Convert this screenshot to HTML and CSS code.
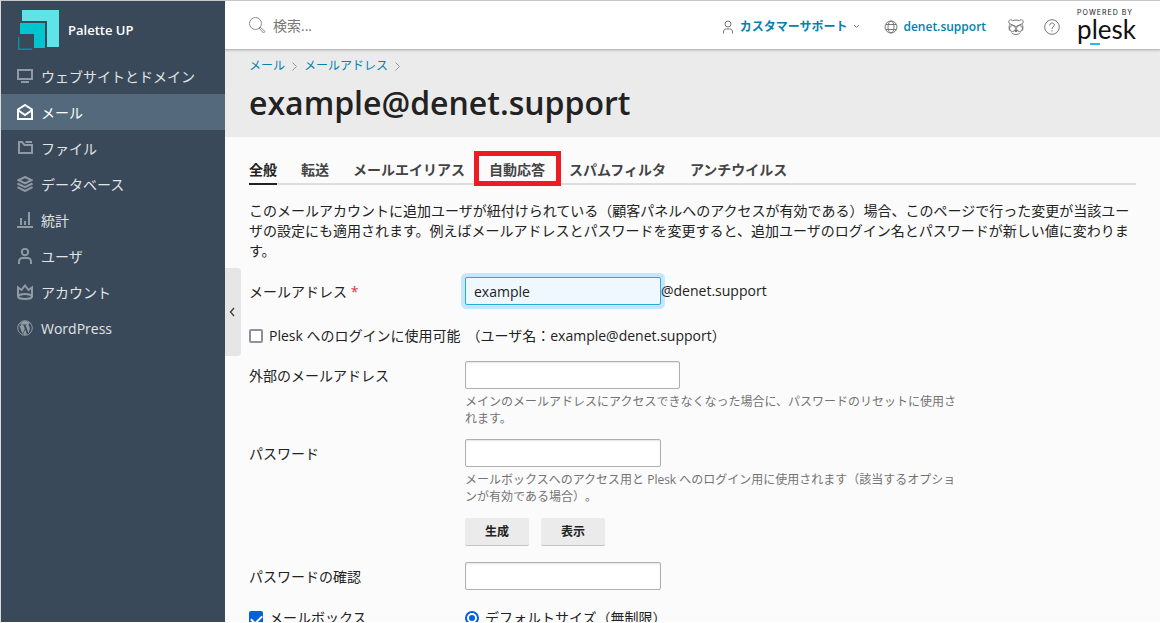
FILE: index.html
```html
<!DOCTYPE html>
<html lang="ja">
<head>
<meta charset="utf-8">
<meta name="viewport" content="width=device-width, initial-scale=1">
<title>example@denet.support</title>
<link rel="stylesheet" href="styles.css">
</head>
<body>
<div class="app">
  <aside class="sidebar">
    <a class="brand" href="#">
      <svg class="brand-logo" width="42" height="42" viewBox="0 0 42 42">
        <path d="M4 1h37v37H29V12H4z" fill="#5de3e8"/>
        <path d="M2 14h25v25H16V25H2z" fill="#00c4ce"/>
        <path d="M.750 28V40.250h13.500" fill="none" stroke="#058f9b" stroke-width="1.500"/>
      </svg>
      <span>Palette UP</span>
    </a>
    <nav class="side-nav">
      <a class="side-link" href="#">
        <svg class="icon" viewBox="0 0 16 16"><path d="M1 2h14v9H1zM4 14h8"/></svg>
        <span>ウェブサイトとドメイン</span>
      </a>
      <a class="side-link is-active" href="#" aria-current="page">
        <svg class="icon" viewBox="0 0 16 16"><path d="M1 5.500L8 1l7 4.500V15H1zM1.500 6.500L8 11l6.500-4.500"/></svg>
        <span>メール</span>
      </a>
      <a class="side-link" href="#">
        <svg class="icon" viewBox="0 0 16 16"><path d="M2 2h3l2.500 3H15v8H2zM8.500 2H15"/></svg>
        <span>ファイル</span>
      </a>
      <a class="side-link" href="#">
        <svg class="icon" viewBox="0 0 16 16"><path d="M8 1l6.500 3.200L8 7.500 1.500 4.200zM.500 7.500L8 11.200l7.500-3.700M.500 11.200L8 15l7.500-3.800"/></svg>
        <span>データベース</span>
      </a>
      <a class="side-link" href="#">
        <svg class="icon" viewBox="0 0 16 16"><path d="M0 15h16M4 6v7M8 9v4M12 0v13"/></svg>
        <span>統計</span>
      </a>
      <a class="side-link" href="#">
        <svg class="icon" viewBox="0 0 16 16"><circle cx="8" cy="4" r="3.200"/><path d="M2 16v-2.500a3.500 3.500 0 0 1 3.500-3.500h5a3.500 3.500 0 0 1 3.500 3.500V16"/></svg>
        <span>ユーザ</span>
      </a>
      <a class="side-link" href="#">
        <svg class="icon" viewBox="0 0 16 16"><path d="M1 13V3.500L4.500 6 8 1.500 11.500 6 15 3.500V13"/><ellipse cx="8" cy="12.500" rx="7" ry="2.500"/></svg>
        <span>アカウント</span>
      </a>
      <a class="side-link" href="#">
        <svg class="icon wp" viewBox="0 0 16 16"><circle cx="8" cy="8" r="7.300"/><path class="wp-fill" d="M2 5l3.700 9.300L7.800 8.500 6.500 5.200 5.500 5v-.6h4.200V5l-1.100.1 2.900 8.300 1-3.300c.6-1.900.3-2.700-.5-4.100-.8-1.300-.4-2.700 1-2.800A6.200 6.200 0 0 0 2.800 4.400h1.900V5l-1 .1L6 12l1.200-3.300zM8.200 9.300L6.300 14.500c1.200.3 2.500.2 3.700-.1z"/></svg>
        <span>WordPress</span>
      </a>
    </nav>
  </aside>

  <div class="main">
    <button class="collapse" type="button" aria-label="サイドバーを折りたたむ">
      <svg width="6" height="10" viewBox="0 0 6 10"><path d="M5 1L1.500 5 5 9"/></svg>
    </button>
    <header class="topbar">
      <form class="search" role="search">
        <svg class="search-icon" width="17" height="17" viewBox="0 0 17 17"><circle cx="6.500" cy="6.500" r="6"/><path d="M11 10l5 4.500-1.500 1.500L10 11z"/></svg>
        <input class="search-input" type="search" placeholder="検索..." aria-label="検索">
      </form>
      <div class="tools">
        <button class="tool account" type="button">
          <svg class="tool-icon" width="12" height="14" viewBox="0 0 12 14"><circle cx="6" cy="4" r="3"/><path d="M1.500 13.500V12c0-2 1-3 3-3h3c2 0 3 1 3 3v1.500"/></svg>
          <span>カスタマーサポート</span>
          <svg class="tool-icon" width="7" height="5" viewBox="0 0 7 5"><path d="M1 1l2.500 2.500L6 1"/></svg>
        </button>
        <a class="tool domain" href="#">
          <svg class="tool-icon" width="14" height="14" viewBox="0 0 14 14"><circle cx="7" cy="7" r="6"/><ellipse cx="7" cy="7" rx="3" ry="6"/><path d="M2 4.500h10M2 9.500h10"/></svg>
          <span>denet.support</span>
        </a>
        <button class="tool panda" type="button" aria-label="アドバイザー">
          <svg class="tool-icon" width="16" height="18" viewBox="0 0 16 18"><path d="M4.500 2.800C3.500.800.500 1.800.700 4c.1 1 .700 1.500 1.500 1.800M11.500 2.800c1-2 4-1 3.800 1.200-.1 1-.700 1.500-1.500 1.800M4.500 2.800c2-.900 5-.900 7 0M2.200 5.800C.800 8 .800 10.500 1.500 12.500M13.800 5.800c1.400 2.200 1.400 4.700.700 6.700M2.500 6L8 8.500 13.500 6M3.500 14.500c2.500 2.700 6.500 2.700 9 0M6.500 12.500h3L8 14z"/><circle cx="4.500" cy="10.500" r="3"/><circle cx="11.500" cy="10.500" r="3"/></svg>
        </button>
        <button class="tool help" type="button" aria-label="ヘルプ">
          <svg class="tool-icon" width="16" height="16" viewBox="0 0 16 16"><circle cx="8" cy="8" r="7.300"/><path d="M5.700 6.500c0-3.300 4.600-3.300 4.600-.500C10.300 7.800 8 7.800 8 10M8 11.200v1.300"/></svg>
        </button>
        <a class="plesk" href="#">
          <span class="powered">POWERED BY</span>
          <span class="plesk-name">p<span class="plesk-l">l</span>esk</span>
        </a>
      </div>
    </header>

    <div class="page-head">
      <nav class="crumbs" aria-label="パンくず">
        <a href="#">メール</a>
        <svg width="5" height="9" viewBox="0 0 5 9"><path d="M.500.500l4 4-4 4"/></svg>
        <a href="#">メールアドレス</a>
        <svg width="5" height="9" viewBox="0 0 5 9"><path d="M.500.500l4 4-4 4"/></svg>
      </nav>
      <h1>example@denet.support</h1>
    </div>

    <main class="content">
      <nav class="tabs">
        <a class="tab is-active" href="#" aria-current="page">全般</a>
        <a class="tab" href="#">転送</a>
        <a class="tab" href="#">メールエイリアス</a>
        <a class="tab is-marked" href="#">自動応答</a>
        <a class="tab" href="#">スパムフィルタ</a>
        <a class="tab" href="#">アンチウイルス</a>
      </nav>
      <p class="intro">このメールアカウントに追加ユーザが紐付けられている（顧客パネルへのアクセスが有効である）場合、このページで行った変更が当該ユーザの設定にも適用されます。例えばメールアドレスとパスワードを変更すると、追加ユーザのログイン名とパスワードが新しい値に変わります。</p>

      <form class="form">
        <div class="row">
          <label class="label" for="email">メールアドレス <span class="required">*</span></label>
          <div class="field inline">
            <input class="text is-focused" id="email" type="text" value="example">
            <span>@denet.support</span>
          </div>
        </div>
        <div class="login-row">
          <input class="check" id="login" type="checkbox">
          <label for="login">Plesk へのログインに使用可能</label>
          <span>（ユーザ名：example@denet.support）</span>
        </div>
        <div class="row">
          <label class="label" for="external">外部のメールアドレス</label>
          <div class="field">
            <input class="text wide" id="external" type="text">
            <p class="hint">メインのメールアドレスにアクセスできなくなった場合に、パスワードのリセットに使用されます。</p>
          </div>
        </div>
        <div class="row">
          <label class="label" for="password">パスワード</label>
          <div class="field">
            <input class="text" id="password" type="password">
            <p class="hint">メールボックスへのアクセス用と Plesk へのログイン用に使用されます（該当するオプションが有効である場合）。</p>
            <div class="buttons">
              <button class="btn" type="button">生成</button>
              <button class="btn" type="button">表示</button>
            </div>
          </div>
        </div>
        <div class="row">
          <label class="label" for="confirm">パスワードの確認</label>
          <div class="field"><input class="text" id="confirm" type="password"></div>
        </div>
        <div class="row">
          <div class="label choice">
            <input class="check" id="mailbox" type="checkbox" checked>
            <label for="mailbox">メールボックス</label>
          </div>
          <div class="field choice">
            <input class="radio" id="size" type="radio" name="size" checked>
            <label for="size">デフォルトサイズ（無制限）</label>
          </div>
        </div>
      </form>
    </main>
  </div>
</div>
</body>
</html>
```
FILE: styles.css
```css
* {
  box-sizing: border-box;
}

body {
  margin: 0;
  height: 100vh;
  overflow: hidden;
  background: #fbfbfb;
  color: #222;
  font: 14px/20px "Open Sans", "Noto Sans CJK JP", sans-serif;
  text-spacing-trim: space-all;
}

a {
  color: #0082ad;
  text-decoration: none;
}

button,
input {
  margin: 0;
  font: inherit;
}

svg {
  flex: none;
  fill: none;
}

.app {
  display: flex;
  height: 100%;
  border-top: 1px solid #c8c8c8;
  border-bottom: 1px solid #fff;
  border-left: 1px solid #dcdcdc;
}

.sidebar {
  flex: none;
  width: 224px;
  background: #394959;
}

.brand {
  display: flex;
  align-items: center;
  gap: 8px;
  height: 57px;
  padding-left: 17px;
  color: #fff;
  font-size: 13px;
  font-weight: 600;
}

.side-nav {
  display: block;
}

.side-link {
  display: flex;
  align-items: center;
  gap: 8px;
  height: 36px;
  padding: 1px 0 0 16px;
  color: #e1e4e6;
}

.side-link.is-active {
  background: #546a7c;
  color: #fff;
}

.icon {
  width: 16px;
  height: 16px;
  margin-bottom: 1px;
  stroke: #8f9aa4;
  stroke-width: 2;
}

.is-active .icon {
  stroke: #fff;
}

.icon.wp {
  stroke-width: 1;
}

.wp-fill {
  fill: #8f9aa4;
  stroke: none;
}

.main {
  position: relative;
  flex: 1;
  min-width: 0;
  height: 100%;
  overflow: hidden;
}

.collapse {
  position: absolute;
  top: 267px;
  left: 0;
  display: flex;
  align-items: center;
  width: 16px;
  height: 88px;
  padding: 0 4px;
  border: 0;
  border-radius: 0 4px 4px 0;
  background: #e6e6e6;
}

.collapse svg {
  stroke: #333;
  stroke-width: 1.2;
}

.topbar {
  position: relative;
  display: flex;
  align-items: center;
  justify-content: space-between;
  height: 49px;
  padding: 1px 24px 0;
  border-bottom: 1px solid #bdbdbd;
  box-shadow: 0 1px 2px rgba(0, 0, 0, 0.15);
  background: #fff;
}

.search {
  display: flex;
  align-items: center;
  gap: 7px;
}

.search-icon {
  stroke: #8c8c8c;
}

.search-input {
  width: 240px;
  padding: 0;
  border: 0;
  outline: 0;
  background: none;
}

.search-input::placeholder {
  color: #777;
}

.tools {
  display: flex;
  align-items: center;
}

.tool {
  display: flex;
  align-items: center;
  gap: 5px;
  padding: 2px 0 0;
  border: 0;
  background: none;
  color: #0082ad;
  font-size: 12px;
  font-weight: 600;
}

.account {
  gap: 6px;
}

.tool-icon {
  stroke: #777;
}

.account {
  margin-right: 24px;
}

.domain {
  margin-right: 22px;
}

.panda {
  margin-right: 20px;
}

.help {
  margin-right: 17px;
}

.plesk {
  display: flex;
  flex-direction: column;
  padding-bottom: 2px;
  color: #111;
  font-family: Lato, sans-serif;
}

.powered {
  font-family: Inter, sans-serif;
  font-size: 7px;
  line-height: 8px;
  letter-spacing: 1px;
}

.plesk-name {
  font-size: 26px;
  line-height: 24px;
}

.plesk-l {
  position: relative;
}

.plesk-l::after {
  content: "";
  position: absolute;
  right: -2px;
  bottom: 0;
  left: -2px;
  height: 2px;
  background: #28bde8;
}

.page-head {
  height: 87px;
  padding: 6px 24px 0;
  background: #ebebeb;
}

.crumbs {
  display: flex;
  align-items: center;
  gap: 7px;
  font-size: 12px;
}

.crumbs svg {
  stroke: #999;
}

h1 {
  margin: 5px 0 0;
  font-size: 32px;
  font-weight: 600;
  line-height: 44px;
}

.content {
  padding: 16px 24px 0;
}

.tabs {
  display: flex;
  gap: 24px;
  border-bottom: 2px solid #dedede;
}

.tab {
  position: relative;
  margin-bottom: -2px;
  padding: 7px 0 3px;
  color: #444;
  font-weight: 700;
}

.tab.is-active {
  border-bottom: 2px solid #222;
  color: #222;
}

.tab.is-marked::after {
  content: "";
  position: absolute;
  inset: -2px -16px -1px -15px;
  border: 5px solid #ed1c24;
}

.intro {
  margin: 16px 0;
}

.row {
  display: flex;
  margin-bottom: 12px;
}

.label {
  flex: none;
  width: 216px;
  padding-top: 5px;
}

.required {
  color: #d8334a;
}

.field {
  flex: 1;
  min-width: 0;
  max-width: 500px;
}

.inline {
  display: flex;
  align-items: center;
}

.text {
  display: block;
  width: 196px;
  height: 28px;
  padding: 0 8px;
  border: 1px solid #b0b0b0;
  border-radius: 2px;
  outline: 0;
  background: #fff;
  box-shadow: inset 0 1px 2px rgba(0, 0, 0, 0.1);
  color: #222;
}

.text.wide {
  width: 215px;
}

.text.is-focused {
  border-color: #28aade;
  background: #f0f8ff;
  box-shadow: 0 0 0 4px #c5e6fc;
}

.inline span {
  position: relative;
}

.hint {
  margin: 4px 0 0;
  color: #737373;
  font-size: 12px;
  line-height: 17px;
}

.login-row {
  display: flex;
  align-items: center;
  gap: 6px;
  margin: 21px 0 15px;
}

.check,
.radio {
  appearance: none;
  display: grid;
  place-items: center;
  flex: none;
  width: 14px;
  height: 14px;
  border: 2px solid #8f8f9d;
  border-radius: 2px;
  background: #fff;
}

.check:checked {
  border-color: #0060df;
  background: #0060df;
}

.check:checked::after {
  content: "";
  width: 9px;
  height: 5px;
  border: solid #fff;
  border-width: 0 0 2px 2px;
  transform: rotate(-45deg);
}

.radio {
  border-radius: 50%;
}

.radio:checked {
  border-color: #0060df;
}

.radio:checked::after {
  content: "";
  width: 6px;
  height: 6px;
  border-radius: 50%;
  background: #0060df;
}

.buttons {
  display: flex;
  gap: 12px;
  margin: 13px 0 4px;
}

.btn {
  width: 64px;
  height: 28px;
  padding: 0;
  border: 0;
  border-bottom: 1px solid #c4c4c4;
  border-radius: 2px;
  background: #ebebeb;
  color: #222;
  font-size: 12px;
  font-weight: 700;
}

.choice {
  display: flex;
  align-items: center;
  gap: 6px;
  padding-top: 6px;
}
```
